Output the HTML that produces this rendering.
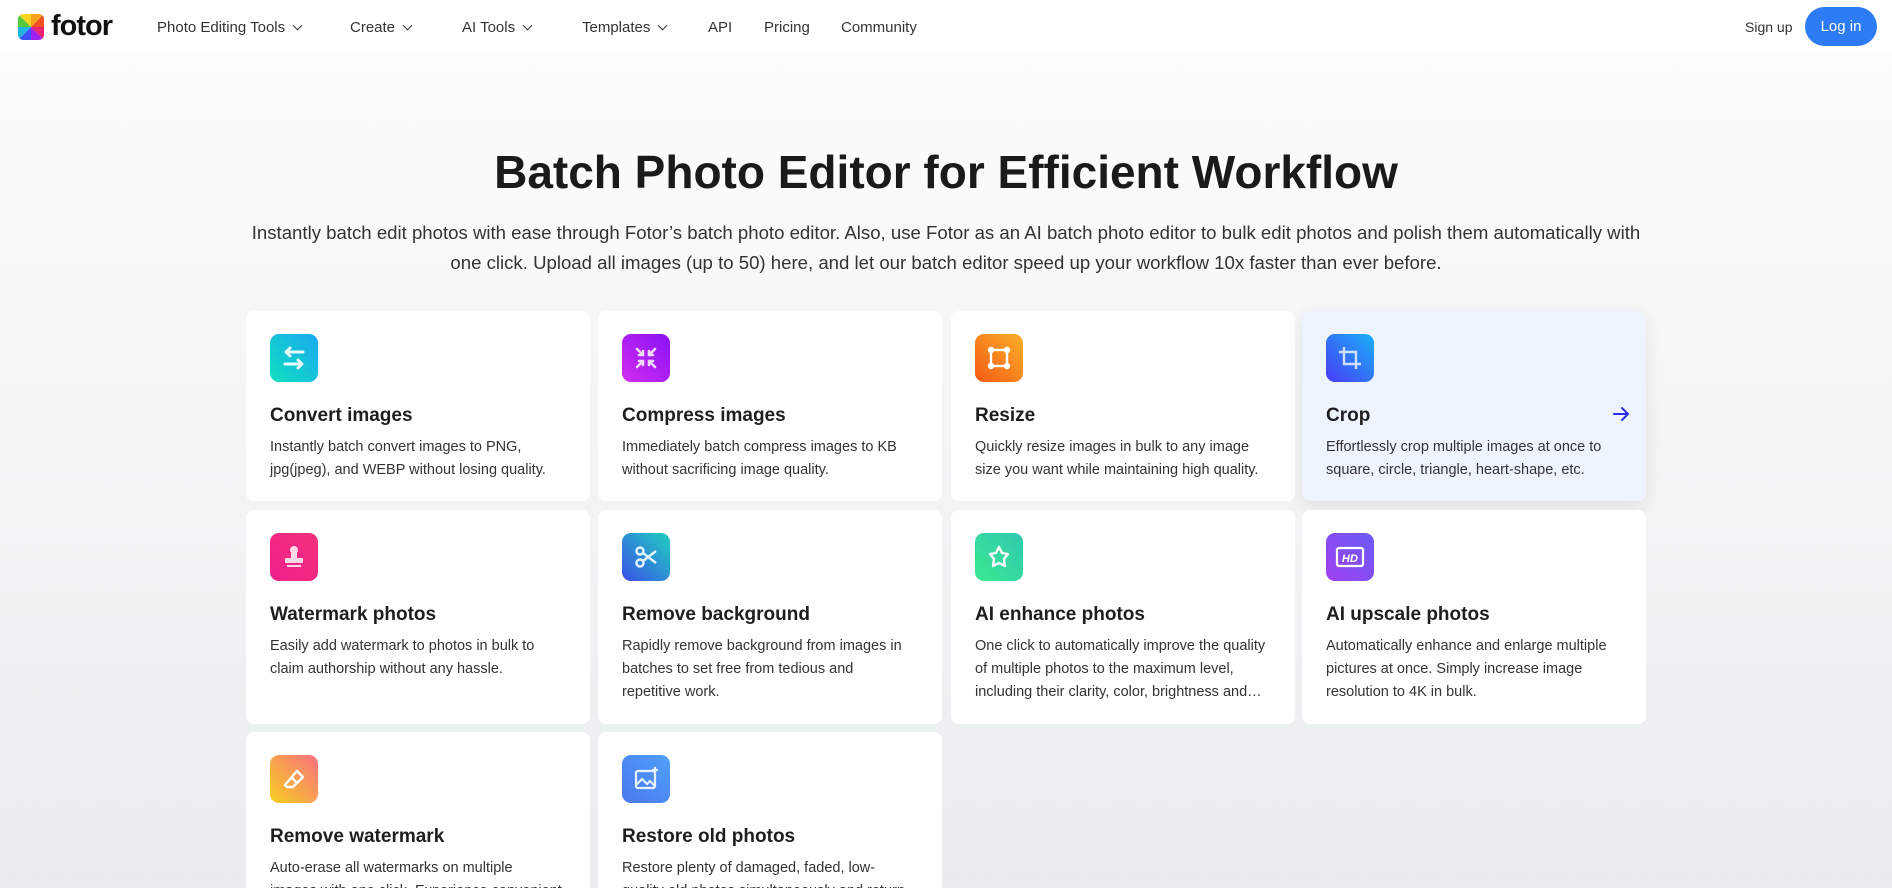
<!DOCTYPE html>
<html><head><meta charset="utf-8"><style>
*{box-sizing:border-box;margin:0;padding:0}
html,body{width:1892px;height:888px;overflow:hidden}
body{font-family:"Liberation Sans",Arial,sans-serif;background:linear-gradient(#fdfefe 0,#fafbfb 150px,#e9eded 888px);color:#222;position:relative}
.nav{position:absolute;top:0;left:0;width:1892px;height:54px;background:#fff}
.nav span{position:absolute;top:19px;font-size:15px;color:#333}
.chev{display:inline-block;width:7px;height:7px;border-right:1.6px solid #333;border-bottom:1.6px solid #333;transform:rotate(45deg);margin-left:9px;position:relative;top:-3px}
.login{position:absolute;left:1805px;top:7px;width:72px;height:39px;border-radius:20px;background:#2e7bf6;color:#fff;font-size:15px;text-align:center;line-height:40px}
h1{position:absolute;top:145px;left:0;width:1892px;text-align:center;font-size:46px;font-weight:bold;color:#1a1a1a}
.sub{position:absolute;top:218px;left:146px;width:1600px;text-align:center;font-size:18.6px;line-height:30px;color:#333;white-space:nowrap}
.card{position:absolute;width:344px;background:#fff;border-radius:8px;padding:23px 24px}
.card .ic{width:48px;height:48px;border-radius:9px;display:flex;align-items:center;justify-content:center}
.card h3{font-size:19px;font-weight:bold;margin-top:23px;color:#1e1e1e}
.card p{font-size:14.5px;line-height:23px;color:#333;margin-top:9px;white-space:nowrap}
.hov{background:#eef4fe;box-shadow:0 4px 16px rgba(0,0,0,.09)}
</style></head><body>
<div class="nav">
<svg style="position:absolute;left:18px;top:14px" width="26" height="26" viewBox="0 0 26 26"><defs><clipPath id="c"><rect width="26" height="26" rx="5"/></clipPath></defs><g clip-path="url(#c)"><path d="M13 13L0 0H13Z" fill="#f9d423"/><path d="M13 13L13 0H26Z" fill="#f7a21b"/><path d="M13 13L26 0V13Z" fill="#f25022"/><path d="M13 13H26V26Z" fill="#e8266f"/><path d="M13 13L26 26H13Z" fill="#a020f0"/><path d="M13 13V26H0Z" fill="#3f51f5"/><path d="M13 13L0 26V13Z" fill="#1fb7e0"/><path d="M13 13H0V0Z" fill="#56c93a"/></g></svg>
<div style="position:absolute;left:51px;top:10px;font-size:29px;font-weight:bold;color:#111;letter-spacing:-1px">fotor</div>
<span style="left:157px">Photo Editing Tools<i class="chev"></i></span>
<span style="left:350px">Create<i class="chev"></i></span>
<span style="left:462px">AI Tools<i class="chev"></i></span>
<span style="left:582px">Templates<i class="chev"></i></span>
<span style="left:708px">API</span>
<span style="left:764px">Pricing</span>
<span style="left:841px">Community</span>
<span style="left:1745px;font-size:14px;top:19px">Sign up</span>
<div class="login">Log in</div>
</div>
<h1>Batch Photo Editor for Efficient Workflow</h1>
<div class="sub">Instantly batch edit photos with ease through Fotor’s batch photo editor. Also, use Fotor as an AI batch photo editor to bulk edit photos and polish them automatically with<br>one click. Upload all images (up to 50) here, and let our batch editor speed up your workflow 10x faster than ever before.</div>

<div class="card" style="left:246px;top:311px;height:190px"><div class="ic" style="background:linear-gradient(225deg,#1aa8f0,#10e0c0)"><svg width="30" height="30" viewBox="0 0 30 30" fill="none" stroke="#e6fbff" stroke-width="3" stroke-linecap="round" stroke-linejoin="round"><path d="M24 9H7M11 5L7 9l4 4M6 21h17M19 17l4 4-4 4"/></svg></div><h3>Convert images</h3><p>Instantly batch convert images to PNG,<br>jpg(jpeg), and WEBP without losing quality.</p></div>
<div class="card" style="left:598px;top:311px;height:190px"><div class="ic" style="background:linear-gradient(225deg,#8a12f5,#d02cf0)"><svg width="30" height="30" viewBox="0 0 30 30" fill="none" stroke="#f0d8ff" stroke-width="2.6" stroke-linecap="round"><path d="M6 6l6 6M12 8v4H8M24 6l-6 6M18 8v4h4M6 24l6-6M8 18h4v4M24 24l-6-6M22 18h-4v4"/></svg></div><h3>Compress images</h3><p>Immediately batch compress images to KB<br>without sacrificing image quality.</p></div>
<div class="card" style="left:951px;top:311px;height:190px"><div class="ic" style="background:linear-gradient(225deg,#fbb02a,#f45a14)"><svg width="30" height="30" viewBox="0 0 30 30" fill="none" stroke="#fff" stroke-width="2.4"><rect x="7" y="7" width="16" height="16"/><circle cx="7" cy="7" r="2" fill="#fff"/><circle cx="23" cy="7" r="2" fill="#fff"/><circle cx="7" cy="23" r="2" fill="#fff"/><circle cx="23" cy="23" r="2" fill="#fff"/></svg></div><h3>Resize</h3><p>Quickly resize images in bulk to any image<br>size you want while maintaining high quality.</p></div>
<div class="card hov" style="left:1302px;top:311px;height:190px"><div class="ic" style="background:linear-gradient(225deg,#18b0f8,#4a3cf8)"><svg width="30" height="30" viewBox="0 0 30 30" fill="none" stroke="#cfe0ff" stroke-width="2.4"><path d="M9 4v17h17M4 9h17v17"/></svg></div><h3>Crop</h3><p>Effortlessly crop multiple images at once to<br>square, circle, triangle, heart-shape, etc.</p>
<svg style="position:absolute;left:310px;top:94px" width="18" height="18" viewBox="0 0 18 18" fill="none" stroke="#2b2ee0" stroke-width="2" stroke-linecap="round"><path d="M2 9h14M10 3l6 6-6 6"/></svg></div>

<div class="card" style="left:246px;top:510px;height:214px"><div class="ic" style="background:linear-gradient(225deg,#f5307a,#f0208c)"><svg width="30" height="30" viewBox="0 0 30 30" fill="#ffd8e8"><circle cx="15" cy="8" r="4"/><rect x="12" y="11" width="6" height="6"/><rect x="6" y="16" width="18" height="5" rx="1"/><rect x="8" y="23" width="14" height="2"/></svg></div><h3>Watermark photos</h3><p>Easily add watermark to photos in bulk to<br>claim authorship without any hassle.</p></div>
<div class="card" style="left:598px;top:510px;height:214px"><div class="ic" style="background:linear-gradient(225deg,#20d0c0,#3a50e8)"><svg width="30" height="30" viewBox="0 0 30 30" fill="none" stroke="#e0f4ff" stroke-width="2.4"><circle cx="9" cy="9" r="3.5"/><circle cx="9" cy="21" r="3.5"/><path d="M12 11l13 10M12 19l13-10"/></svg></div><h3>Remove background</h3><p>Rapidly remove background from images in<br>batches to set free from tedious and<br>repetitive work.</p></div>
<div class="card" style="left:951px;top:510px;height:214px"><div class="ic" style="background:linear-gradient(225deg,#30c8b0,#3ce890)"><svg width="30" height="30" viewBox="0 0 30 30" fill="none" stroke="#fff" stroke-width="2.4" stroke-linejoin="round"><path d="M15 5l3 6 6 1-4 5 1 7-6-3-6 3 1-7-4-5 6-1z"/></svg></div><h3>AI enhance photos</h3><p>One click to automatically improve the quality<br>of multiple photos to the maximum level,<br>including their clarity, color, brightness and…</p></div>
<div class="card" style="left:1302px;top:510px;height:214px"><div class="ic" style="background:linear-gradient(225deg,#6a5cf8,#a040f0)"><svg width="32" height="30" viewBox="0 0 32 30" fill="none"><rect x="3" y="6" width="26" height="18" rx="2" stroke="#fff" stroke-width="2.2"/><text x="16" y="20" text-anchor="middle" font-family="Liberation Sans" font-weight="bold" font-style="italic" font-size="11" fill="#fff">HD</text></svg></div><h3>AI upscale photos</h3><p>Automatically enhance and enlarge multiple<br>pictures at once. Simply increase image<br>resolution to 4K in bulk.</p></div>

<div class="card" style="left:246px;top:732px;height:200px"><div class="ic" style="background:linear-gradient(225deg,#f87080,#f8d020)"><svg width="30" height="30" viewBox="0 0 30 30" fill="none" stroke="#fff" stroke-width="2.4" stroke-linejoin="round"><path d="M18 7l6 6-10 10H8l-2-2z"/><path d="M12 13l6 6"/></svg></div><h3>Remove watermark</h3><p>Auto-erase all watermarks on multiple<br>images with one click. Experience convenient</p></div>
<div class="card" style="left:598px;top:732px;height:200px"><div class="ic" style="background:linear-gradient(225deg,#50a0f8,#4a78f0)"><svg width="30" height="30" viewBox="0 0 30 30" fill="none" stroke="#e8f2ff" stroke-width="2.2"><rect x="5" y="7" width="19" height="17" rx="2"/><path d="M5 21l6-6 5 5 3-3 5 5"/><path d="M24 3v6M21 6h6"/></svg></div><h3>Restore old photos</h3><p>Restore plenty of damaged, faded, low-<br>quality old photos simultaneously and return</p></div>
</body></html>
